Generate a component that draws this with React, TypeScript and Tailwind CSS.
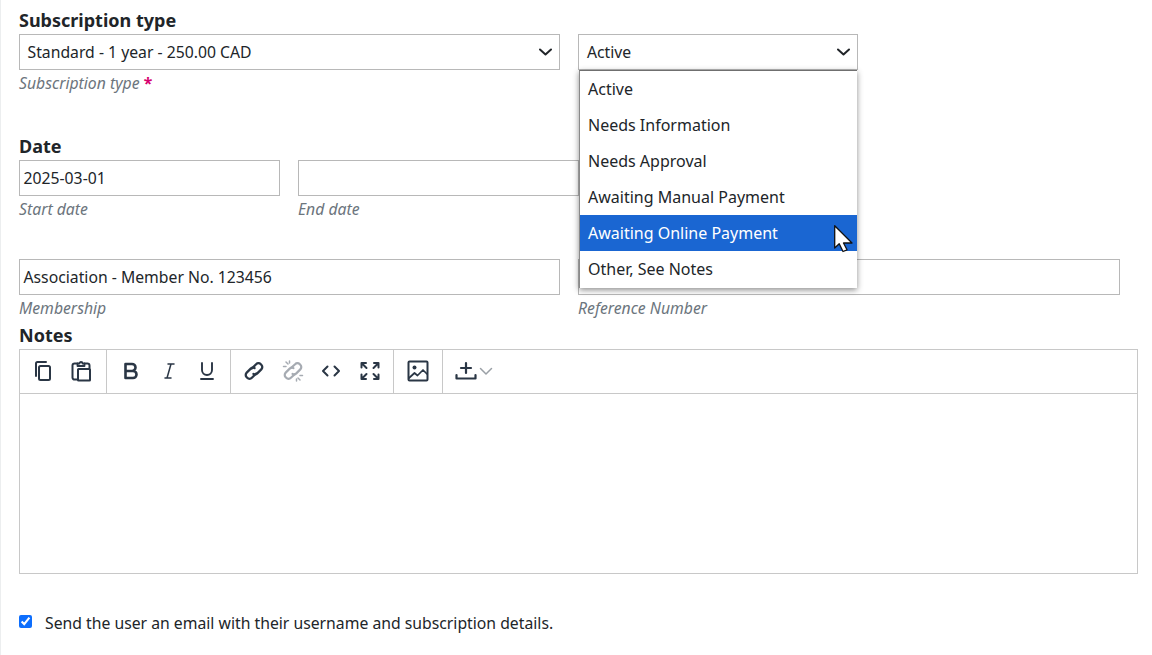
import React from "react";

const Chevron = () => (
  <svg width="13" height="14" viewBox="0 0 13 14" fill="none" stroke="#212529" strokeWidth="2" strokeLinecap="round" strokeLinejoin="round"><path d="M1 4.500 6.500 9.500l5.500-5" /></svg>
);

const Ico = ({ children, cls = "" }: { children: React.ReactNode; cls?: string }) => (
  <svg width="24" height="24" viewBox="0 0 24 24" fill="none" stroke="#2a3645" strokeWidth="2" strokeLinecap="round" strokeLinejoin="round" className={cls}>{children}</svg>
);

const Field = ({ value, label, w }: { value: string; label: string; w: string }) => (
  <div className={`flex flex-col ${w}`}>
    <div className="h-9 border border-[#b8b8b8] bg-white pl-[3.5px] pr-1 text-[15.75px] leading-[34px] text-[#212529]">{value}</div>
    <div className="mt-[3px] h-[20px] text-[15.75px] italic leading-[20px] text-[#6c757d]">{label}</div>
  </div>
);

const options = ["Active", "Needs Information", "Needs Approval", "Awaiting Manual Payment", "Awaiting Online Payment", "Other, See Notes"];

export default function App() {
  return (
    <div className="relative h-[655px] w-[1152px] overflow-hidden bg-white font-['Noto_Sans',sans-serif] text-[#212529]">
      <div className="h-full border-l border-l-[#eceeef] pl-[18px]">
        <div className="h-[34px] pt-[8px] text-[18px] font-bold leading-[24px]">Subscription type</div>
        <div className="flex gap-[18px]">
          <div className="w-[541px]">
            <div className="flex h-9 items-center justify-between border border-[#b8b8b8] pl-[7.5px] pr-[7px] text-[15.75px]">
              <span className="pt-[1px]">Standard - 1 year - 250.00 CAD</span><Chevron />
            </div>
            <div className="mt-[3px] h-[20px] text-[15.75px] italic leading-[20px] text-[#6c757d]">Subscription type <b className="font-bold not-italic text-[#d6006e]">*</b></div>
          </div>
          <div className="flex h-9 w-[280px] items-center justify-between border border-[#b8b8b8] pl-2 pr-[7px] text-[15.75px]">
            <span className="pt-[1px]">Active</span><Chevron />
          </div>
        </div>
        <div className="mt-[41px] h-[26px] text-[18px] font-bold leading-[24px]">Date</div>
        <div className="flex gap-[18px]">
          <Field value="2025-03-01" label="Start date" w="w-[261px]" />
          <Field value="" label="End date" w="w-[281px]" />
        </div>
        <div className="mt-[40px] flex gap-[18px]">
          <Field value="Association - Member No. 123456" label="Membership" w="w-[541px]" />
          <Field value="" label="Reference Number" w="w-[542px]" />
        </div>
        <div className="mt-[5px] h-[25px] text-[18px] font-bold leading-[24px]">Notes</div>
        <div className="mt-[1px] flex h-[225px] w-[1119px] flex-col border border-[#c8c8c8]">
          <div className="flex h-[44px] items-center border-b border-b-[#c8c8c8] text-[#2a3645]">
            <div className="flex h-full w-[87px] items-center gap-[14px] border-r border-r-[#c8c8c8] pb-[2px] pl-[11px]">
              <Ico><rect x="8" y="7" width="11" height="14" rx="1.500" /><path d="M5 17V4.500A1.500 1.500 0 0 1 6.500 3H15" /></Ico>
              <Ico><path d="M8.500 4.500H6A2 2 0 0 0 3.500 6.500v12A2 2 0 0 0 6 20.500h2.500" /><path d="M15.500 4.500H18a2 2 0 0 1 2.500 2V9" /><path d="M8.500 7V4.500h2a1.500 1.500 0 0 1 3 0h2V7z" strokeWidth="1.800" /><rect x="9" y="10" width="12" height="11.500" rx="0.500" /></Ico>
            </div>
            <div className="flex h-full w-[124px] items-center gap-[14px] border-r border-r-[#c8c8c8] pb-[2px] pl-[12px]">
              <Ico><path d="M6.500 5h6.500a3.500 3.500 0 0 1 0 7H6.500zM6.500 12h7.500a3.500 3.500 0 0 1 0 7H6.500z" strokeWidth="2.600" /></Ico>
              <Ico><path d="M11 5h6M8 19h6M14 5l-4 14" strokeWidth="1.500" /></Ico>
              <Ico><path d="M7 4v7a5 5 0 0 0 10 0V4M6 20h12" strokeWidth="1.900" /></Ico>
            </div>
            <div className="flex h-full w-[163px] items-center gap-[14.5px] border-r border-r-[#c8c8c8] pb-[2px] pl-[11px]">
              <Ico><path d="m9.800 9.500 4.300-4.300a3.300 3.300 0 0 1 4.700 0l.500.500a3.300 3.300 0 0 1 0 4.700l-4 4a3.300 3.300 0 0 1-3.800.500" strokeWidth="2.300" /><path d="m14.200 14.500-4.300 4.300a3.300 3.300 0 0 1-4.700 0l-.500-.500a3.300 3.300 0 0 1 0-4.700l4-4a3.300 3.300 0 0 1 3.800-.500" strokeWidth="2.300" /></Ico>
              <Ico><g stroke="#a6abb2"><path d="m10.500 8.500 3.600-3.300a3.300 3.300 0 0 1 4.700 0l.500.500a3.300 3.300 0 0 1 0 4.700l-4 4a3.300 3.300 0 0 1-3.800.500" strokeWidth="2.200" /><path d="m13.500 15.500-3.600 3.300a3.300 3.300 0 0 1-4.700 0l-.500-.500a3.300 3.300 0 0 1 0-4.700l4-4a3.300 3.300 0 0 1 3.800-.500" strokeWidth="2.200" /><path d="M5 3l2 2M2.500 7.500h2.500M8.500 2v2M19 21l-2-2M21.500 16.500H19M15.500 22v-2" strokeWidth="1.500" /></g></Ico>
              <Ico><path d="m8.500 7.500-4.500 4.500 4.500 4.500M15.500 7.500l4.500 4.500-4.500 4.500" /></Ico>
              <Ico><path d="M3.500 8.500V4h4.500M20.500 8.500V4h-4.500M3.500 15.500V20h4.500M20.500 15.500V20h-4.500M5 5.500l3.500 3.500M19 5.500 15.500 9M5 18.500 8.500 15M19 18.500 15.500 15" strokeWidth="2" /></Ico>
            </div>
            <div className="flex h-full w-[49px] items-center border-r border-r-[#c8c8c8] pb-[2px] pl-[12px]">
              <Ico><rect x="2.500" y="2.500" width="19" height="19" rx="1" /><circle cx="8.500" cy="8.500" r="2" fill="#2a3645" stroke="none" /><path d="m3 19 5.500-5 3 2.500 5.500-5.500 4 4" strokeWidth="1.700" /></Ico>
            </div>
            <div className="flex items-center pb-[2px] pl-[11px]">
              <Ico><path d="M12 4v10M7 9h10M2.500 16v3.500h19V16" strokeWidth="2.200" /></Ico>
              <svg width="14" height="14" viewBox="0 0 14 14" fill="none" stroke="#9aa0a6" strokeWidth="1.500" strokeLinecap="round" strokeLinejoin="round" className="ml-[1px]"><path d="M1.500 4.500 7 10l5.500-5.500" /></svg>
            </div>
          </div>
          <div className="flex-1" />
        </div>
        <label className="mt-[38px] flex items-start text-[15.75px] leading-[22px] text-[#212529]">
          <input type="checkbox" defaultChecked className="m-0 mt-[3px] h-[13px] w-[13px] accent-[#0d6efd]" />
          <span className="ml-[13px]">Send the user an email with their username and subscription details.</span>
        </label>
      </div>

      <div className="absolute left-[579px] top-[70px] w-[278px] border-t border-l border-t-[#6f6f6f] border-l-[#8a8a8a] bg-white shadow-[0_2px_6px_rgba(0,0,0,0.45)]">
        <div className="flex flex-col">
          {options.map((o, i) => (
            <div key={o} className={`h-9 pl-2 text-[16px] leading-[36px] ${i === 4 ? "bg-[#1a66d2] text-white" : "text-[#212529]"}`}>{o}</div>
          ))}
        </div>
        <div className="h-px" />
      </div>
      <svg className="absolute left-[834px] top-[225px]" width="20" height="28" viewBox="0 0 20 28">
        <path d="M0.700 0.700V23l4.500-4.300L9 26.500l4-1.700-3.500-6.800H18z" fill="#fff" stroke="#111" strokeWidth="1.300" strokeLinejoin="round" />
      </svg>
    </div>
  );
}
